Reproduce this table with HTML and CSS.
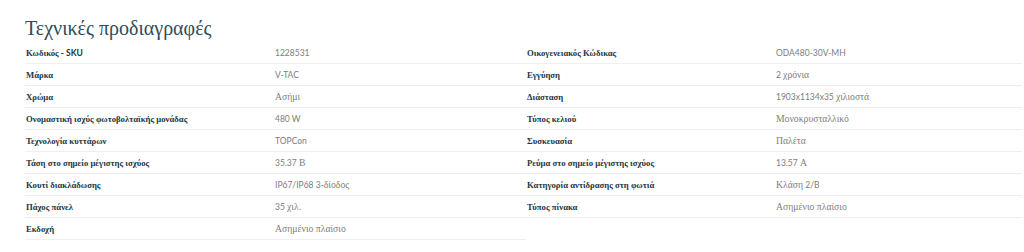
FILE: index.html
```html
<!DOCTYPE html>
<html lang="el">
<head>
<meta charset="utf-8">
<link rel="stylesheet" href="styles.css">
</head>
<body>
<section class="specs">
  <h2 class="specs-title">Τεχνικές προδιαγραφές</h2>
  <div class="specs-grid">
    <div class="spec-table">
      <div class="spec-row"><span class="spec-label"><span class="gr">Κωδικός</span> - SKU</span><span class="spec-value">1228531</span></div>
      <div class="spec-row"><span class="spec-label"><span class="gr">Μάρκα</span></span><span class="spec-value">V-TAC</span></div>
      <div class="spec-row"><span class="spec-label"><span class="gr">Χρώμα</span></span><span class="spec-value"><span class="gr">Ασήμι</span></span></div>
      <div class="spec-row"><span class="spec-label"><span class="gr">Ονομαστική ισχύς φωτοβολταϊκής μονάδας</span></span><span class="spec-value">480 W</span></div>
      <div class="spec-row"><span class="spec-label"><span class="gr">Τεχνολογία κυττάρων</span></span><span class="spec-value">TOPCon</span></div>
      <div class="spec-row"><span class="spec-label"><span class="gr">Τάση στο σημείο μέγιστης ισχύος</span></span><span class="spec-value">35.37 <span class="gr">Β</span></span></div>
      <div class="spec-row"><span class="spec-label"><span class="gr">Κουτί διακλάδωσης</span></span><span class="spec-value">IP67/IP68 3-<span class="gr">δίοδος</span></span></div>
      <div class="spec-row"><span class="spec-label"><span class="gr">Πάχος πάνελ</span></span><span class="spec-value">35 <span class="gr">χιλ.</span></span></div>
      <div class="spec-row"><span class="spec-label"><span class="gr">Εκδοχή</span></span><span class="spec-value"><span class="gr">Ασημένιο πλαίσιο</span></span></div>
    </div>
    <div class="spec-table">
      <div class="spec-row"><span class="spec-label"><span class="gr">Οικογενειακός Κώδικας</span></span><span class="spec-value">ODA480-30V-MH</span></div>
      <div class="spec-row"><span class="spec-label"><span class="gr">Εγγύηση</span></span><span class="spec-value">2 <span class="gr">χρόνια</span></span></div>
      <div class="spec-row"><span class="spec-label"><span class="gr">Διάσταση</span></span><span class="spec-value">1903x1134x35 <span class="gr">χιλιοστά</span></span></div>
      <div class="spec-row"><span class="spec-label"><span class="gr">Τύπος κελιού</span></span><span class="spec-value"><span class="gr">Μονοκρυσταλλικό</span></span></div>
      <div class="spec-row"><span class="spec-label"><span class="gr">Συσκευασία</span></span><span class="spec-value"><span class="gr">Παλέτα</span></span></div>
      <div class="spec-row"><span class="spec-label"><span class="gr">Ρεύμα στο σημείο μέγιστης ισχύος</span></span><span class="spec-value">13.57 <span class="gr">Α</span></span></div>
      <div class="spec-row"><span class="spec-label"><span class="gr">Κατηγορία αντίδρασης στη φωτιά</span></span><span class="spec-value"><span class="gr">Κλάση</span> 2/B</span></div>
      <div class="spec-row"><span class="spec-label"><span class="gr">Τύπος πίνακα</span></span><span class="spec-value"><span class="gr">Ασημένιο πλαίσιο</span></span></div>
    </div>
  </div>
</section>
</body>
</html>
```
FILE: styles.css
```css
html, body {
  margin: 0;
  padding: 0;
  background: #ffffff;
}

.specs {
  padding: 16px 2px 0 25px;
  font-family: "Lato", sans-serif;
}

.specs-title {
  margin: 0 0 2px 0;
  font-family: "Liberation Serif", serif;
  font-weight: normal;
  font-size: 20px;
  line-height: 24px;
  color: #2f4c58;
}

.specs-grid {
  display: grid;
  grid-template-columns: 501px 1fr;
  align-items: start;
}

.spec-row {
  display: grid;
  grid-template-columns: 249px 1fr;
  align-items: center;
  height: 21px;
  border-bottom: 1px solid #efefef;
  padding-left: 1px;
  font-size: 8.5px;
}

.spec-label {
  font-weight: bold;
  color: #223642;
}

.spec-label .gr {
  font-size: 8.7px;
}

.spec-value {
  color: #7d7d7d;
}

.spec-value .gr {
  font-size: 9.7px;
}

.gr {
  font-family: "Liberation Serif", serif;
}
```
